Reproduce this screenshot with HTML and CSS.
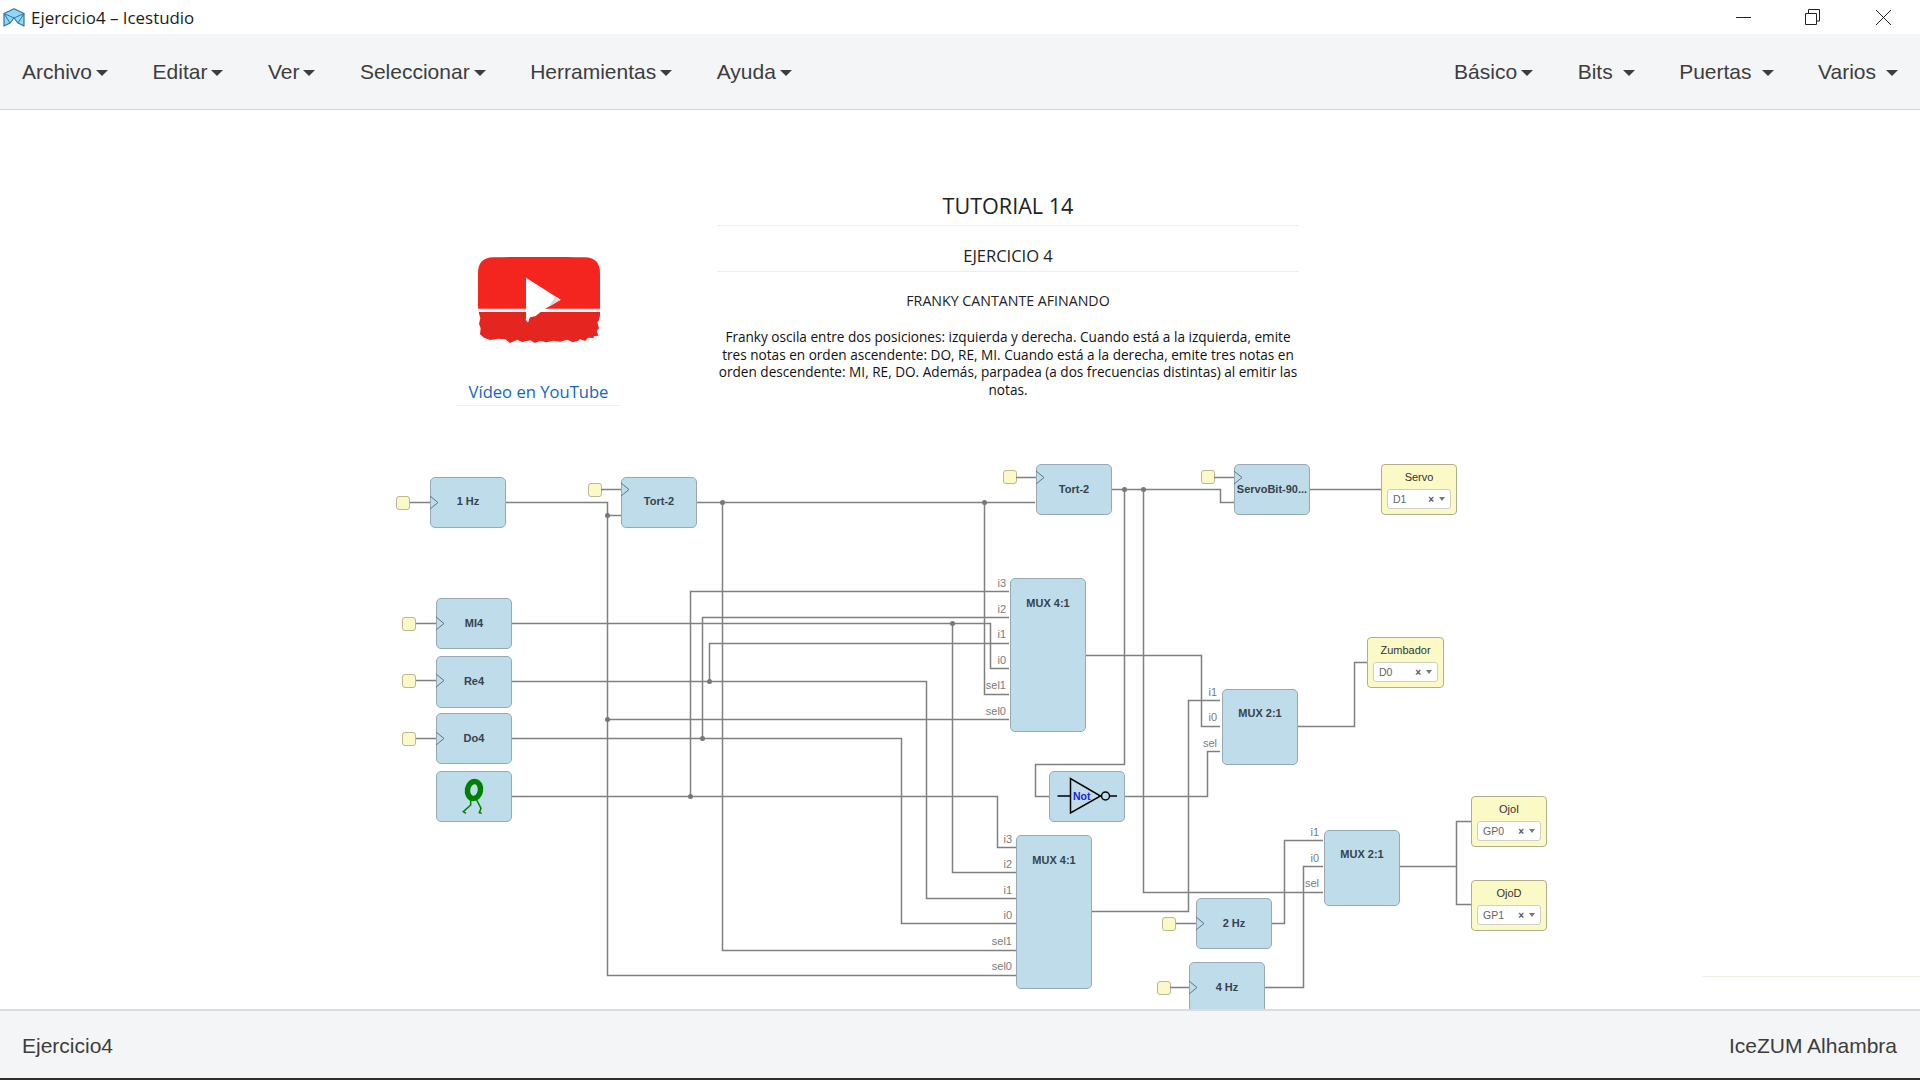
FILE: index.html
```html
<!DOCTYPE html>
<html lang="es">
<head>
<meta charset="utf-8">
<title>Ejercicio4 – Icestudio</title>
<link rel="stylesheet" href="styles.css">
</head>
<body>
<div class="app">
  <header class="titlebar">
    <div class="title-left">
      <svg class="app-icon" viewBox="0 0 22 19" width="22" height="19">
        <path d="M1 5.5 11 .8 21 5.5V18L15 15 11 10 7 15 1 18Z" fill="#8fd6f7" stroke="#2f7699" stroke-width="1.2" stroke-linejoin="round"/>
        <path d="M1 5.5 7 15M21 5.5 15 15M1 5.5 11 10 21 5.5" fill="none" stroke="#2f7699" stroke-width="1"/>
      </svg>
      <span class="title-text">Ejercicio4 – Icestudio</span>
    </div>
    <div class="win-controls">
      <svg class="win-min" width="15" height="15" viewBox="0 0 15 15"><path d="M0 7.5H15" stroke="#222" fill="none"/></svg>
      <svg class="win-max" width="15" height="16" viewBox="0 0 15 16"><path d="M.5 4.5H11.5V15.5H.5ZM3.5 4.5V.5H14.5V12H11.5" stroke="#222" fill="none"/></svg>
      <svg class="win-close" width="15" height="15" viewBox="0 0 15 15"><path d="M0 0 15 15M15 0 0 15" stroke="#222" fill="none"/></svg>
    </div>
  </header>

  <nav class="navbar">
    <ul class="menu">
      <li>Archivo<i class="caret"></i></li>
      <li>Editar<i class="caret"></i></li>
      <li>Ver<i class="caret"></i></li>
      <li>Seleccionar<i class="caret"></i></li>
      <li>Herramientas<i class="caret"></i></li>
      <li>Ayuda<i class="caret"></i></li>
    </ul>
    <ul class="menu">
      <li>Básico<i class="caret"></i></li>
      <li>Bits<i class="caret wide"></i></li>
      <li>Puertas<i class="caret wide"></i></li>
      <li>Varios<i class="caret wide"></i></li>
    </ul>
  </nav>

  <main class="canvas">
    <section class="note-video">
      <svg class="yt-logo" viewBox="0 0 366 264" width="122" height="88">
        <path d="M0 155V50C0 18 14 2 46 1 130-1 236-1 320 1 352 2 366 18 366 50V155Z" fill="#f4241f"/>
        <path d="M2 165H368L365 180 362 192 358 196 363 214 356 222 361 236 348 238 346 243 330 242 322 252 306 247 300 251 284 256 268 248 246 254 226 251 206 256 186 252 170 258 158 250 132 255 118 248 96 258 82 247 60 245 36 249 18 242 6 232 8 214 3 200 7 184Z" fill="#e5251f"/>
        <path d="M144 62 248 128 142 190 150 170 144 165Z" fill="#fff"/>
        <path d="M232 118 248 128 212 149Z" fill="#dcdcdc"/>
        <path d="M144 155V190L150 197 156 180 172 178 188 165Z" fill="#fff"/>
      </svg>
      <a class="video-link">Vídeo en YouTube</a>
    </section>

    <section class="note-text">
      <h1>TUTORIAL 14</h1>
      <h2>EJERCICIO 4</h2>
      <h3>FRANKY CANTANTE AFINANDO</h3>
      <p>Franky oscila entre dos posiciones: izquierda y derecha. Cuando está a la izquierda, emite tres notas en orden ascendente: DO, RE, MI. Cuando está a la derecha, emite tres notas en orden descendente: MI, RE, DO. Además, parpadea (a dos frecuencias distintas) al emitir las notas.</p>
    </section>

    <div class="faint-line"></div>

    <div class="pin p1"></div><div class="pin p2"></div><div class="pin p3"></div>
    <div class="pin p4"></div><div class="pin p5"></div><div class="pin p6"></div>
    <div class="pin p7"></div><div class="pin p8"></div><div class="pin p9"></div>

    <div class="node n-hz1">1 Hz</div>
    <div class="node n-tort1">Tort-2</div>
    <div class="node n-tort3">Tort-2</div>
    <div class="node n-servobit">ServoBit-90...</div>
    <div class="node n-mi4">MI4</div>
    <div class="node n-re4">Re4</div>
    <div class="node n-do4">Do4</div>
    <div class="node n-fig"></div>
    <div class="node n-not"></div>
    <div class="node tall n-muxa">MUX 4:1</div>
    <div class="node tall n-muxb">MUX 4:1</div>
    <div class="node square n-mux2a">MUX 2:1</div>
    <div class="node square n-mux2b">MUX 2:1</div>
    <div class="node n-hz2">2 Hz</div>
    <div class="node n-hz4">4 Hz</div>

    <div class="out n-servo"><span>Servo</span><div class="sel"><b>D1</b><em>×</em><i></i></div></div>
    <div class="out n-zum"><span>Zumbador</span><div class="sel"><b>D0</b><em>×</em><i></i></div></div>
    <div class="out n-ojoi"><span>OjoI</span><div class="sel"><b>GP0</b><em>×</em><i></i></div></div>
    <div class="out n-ojod"><span>OjoD</span><div class="sel"><b>GP1</b><em>×</em><i></i></div></div>

    <svg class="wires" viewBox="0 110 1920 899" width="1920" height="899">
      <g class="wire">
        <path d="M410 502.5H430M506 502.5H607.5V975.5H1016M607.5 515.5H621M601 489.5H621"/>
        <path d="M697 502.5H1035M722.5 502.5V950.5H1016M984.5 502.5V694.5H1009"/>
        <path d="M416 623.5H436M416 680.5H436M416 738.5H436"/>
        <path d="M512 623.5H990.5V668.5H1009"/>
        <path d="M512 681.5H926.5V898.5H1016"/>
        <path d="M512 738.5H901.5V923.5H1016"/>
        <path d="M512 796.5H997.5V847.5H1016"/>
        <path d="M690.5 796.5V591.5H1009M702.5 738.5V617.5H1009M709.5 681.5V643.5H1009M607.5 719.5H1009"/>
        <path d="M952.5 623.5V872.5H1016"/>
        <path d="M1016 477.5H1036M1112 489.5H1220.5V502.5H1234M1214 477.5H1234M1310 489.5H1381"/>
        <path d="M1124.5 489.5V764.5H1035.5V796.5H1049M1143.5 489.5V892.5H1323"/>
        <path d="M1125 796.5H1207.5V751.5H1220M1086 655.5H1201.5V726.5H1220M1092 911.5H1188.5V700.5H1220"/>
        <path d="M1298 726.5H1354.5V662.5H1367"/>
        <path d="M1176 923.5H1196M1272 923.5H1284.5V840.5H1323M1170 987.5H1189M1265 987.5H1303.5V866.5H1323"/>
        <path d="M1400 866.5H1456.5M1471 821.5H1456.5V904.5H1471"/>
      </g>
      <g class="joints">
        <circle cx="607.5" cy="515.5" r="2.5"/><circle cx="722.5" cy="502.5" r="2.5"/>
        <circle cx="984.5" cy="502.5" r="2.5"/><circle cx="952.5" cy="623.5" r="2.5"/>
        <circle cx="709.5" cy="681.5" r="2.5"/><circle cx="702.5" cy="738.5" r="2.5"/>
        <circle cx="607.5" cy="719.5" r="2.5"/><circle cx="690.5" cy="796.5" r="2.5"/>
        <circle cx="1124.5" cy="489.5" r="2.5"/><circle cx="1143.5" cy="489.5" r="2.5"/>
      </g>
      <path class="clk" d="M430 496 438 502.5 430 509M621 483 629 489.5 621 496M436 617 444 623.5 436 630M436 674 444 680.5 436 687M436 732 444 738.5 436 745M1036 471 1044 477.5 1036 484M1234 471 1242 477.5 1234 484M1196 917 1204 923.5 1196 930M1189 981 1197 987.5 1189 994"/>
      <g class="port">
        <text x="1006" y="587">i3</text><text x="1006" y="613">i2</text><text x="1006" y="638">i1</text>
        <text x="1006" y="664">i0</text><text x="1006" y="689">sel1</text><text x="1006" y="715">sel0</text>
        <text x="1217" y="696">i1</text><text x="1217" y="721">i0</text><text x="1217" y="747">sel</text>
        <text x="1012" y="843">i3</text><text x="1012" y="868">i2</text><text x="1012" y="894">i1</text>
        <text x="1012" y="919">i0</text><text x="1012" y="945">sel1</text><text x="1012" y="970">sel0</text>
        <text x="1319" y="836">i1</text><text x="1319" y="862">i0</text><text x="1319" y="887">sel</text>
      </g>
      <g class="figure">
        <ellipse cx="474" cy="790" rx="6.5" ry="8.5" transform="rotate(10 474 790)"/>
        <path class="legs" d="M470.7 800V805L463.3 811.7 466 813.3M476.7 800 481 808.3 479.3 812.7 481.7 813.3"/>
      </g>
      <g class="gate">
        <path d="M1057.5 796H1070.5M1070.5 778.5V813L1100.5 796ZM1110 796H1117"/>
        <circle cx="1105.5" cy="796" r="4"/>
        <text x="1073" y="800">Not</text>
      </g>
    </svg>
  </main>

  <footer class="statusbar">
    <span>Ejercicio4</span>
    <span>IceZUM Alhambra</span>
  </footer>
  <div class="bottom-edge"></div>
</div>
</body>
</html>
```

FILE: styles.css
```css
* { box-sizing: border-box; }
html, body { margin: 0; height: 100%; overflow: hidden; background: #fff; }
.app { display: flex; flex-direction: column; height: 100vh; font-family: "Liberation Sans", Arial, sans-serif; color: #3d3d3d; }

.titlebar { height: 34px; flex: none; display: flex; justify-content: space-between; align-items: center; background: #fff; }
.title-left { display: flex; align-items: center; gap: 6px; padding-left: 3px; }
.title-text { font-family: "Open Sans", sans-serif; font-size: 16.9px; color: #1b1b1b; }
.win-controls { display: flex; align-items: center; gap: 54px; padding-right: 29px; }
.win-close { margin-left: 2px; }

.navbar { height: 76px; flex: none; display: flex; justify-content: space-between; align-items: center; padding: 0 22px; background: #f4f5f7; border-bottom: 1px solid #d6d6d6; }
.menu { display: flex; gap: 44.5px; margin: 0; padding: 0; list-style: none; font-size: 21px; }
.menu li { display: flex; align-items: center; }
.caret { width: 0; height: 0; margin-left: 4px; margin-top: 2px; border-left: 6px solid transparent; border-right: 6px solid transparent; border-top: 6px solid #3d3d3d; }
.caret.wide { margin-left: 10px; }

.canvas { position: relative; flex: 1; overflow: hidden; background: #fff; }

.note-video { position: absolute; left: 456px; top: 147px; width: 165px; height: 149px; display: flex; flex-direction: column; align-items: center; border-bottom: 1px solid #f0f0f0; font-family: "Open Sans", sans-serif; }
.yt-logo { flex: none; }
.video-link { margin-top: 35px; font-size: 16.6px; font-weight: 500; color: #1565c0; }

.note-text { position: absolute; left: 717px; top: 80px; width: 582px; text-align: center; font-family: "Open Sans", sans-serif; color: #222; }
.note-text h1 { margin: 0; height: 36px; padding-top: 1px; font-size: 21.6px; line-height: 30px; font-weight: 400; border-bottom: 1px solid #eee; }
.note-text h2 { margin: 0; height: 46px; padding-top: 19px; font-size: 16.5px; line-height: 22px; font-weight: 400; border-bottom: 1px solid #eee; }
.note-text h3 { margin: 19px 0 0; font-size: 14.2px; line-height: 20px; font-weight: 400; }
.note-text p { margin: 17px 0 0; font-size: 13.6px; line-height: 17.7px; color: #111; }

.faint-line { position: absolute; left: 1703px; top: 866px; width: 217px; height: 1px; background: #eeebe2; }

.pin { position: absolute; width: 14px; height: 14px; background: #fbf8c9; border: 1px solid #bcb98f; border-radius: 3px; }
.p1 { left: 396px; top: 386px; }
.p2 { left: 588px; top: 373px; }
.p3 { left: 402px; top: 507px; }
.p4 { left: 402px; top: 564px; }
.p5 { left: 402px; top: 622px; }
.p6 { left: 1003px; top: 360px; }
.p7 { left: 1201px; top: 360px; }
.p8 { left: 1162px; top: 807px; }
.p9 { left: 1157px; top: 871px; }

.node { position: absolute; width: 76px; height: 51px; display: flex; justify-content: center; align-items: center; padding-bottom: 2px; background: #bedcea; border: 1px solid #97a9b3; border-radius: 5px; font-size: 11px; font-weight: 700; color: #37424a; white-space: nowrap; }
.node.tall { height: 154px; align-items: flex-start; padding: 18px 0 0; }
.node.square { height: 76px; align-items: flex-start; padding: 17px 0 0; }
.n-hz1 { left: 430px; top: 367px; padding-bottom: 4px; }
.n-tort1 { left: 621px; top: 367px; padding-bottom: 3px; }
.n-tort3 { left: 1036px; top: 354px; }
.n-servobit { left: 1234px; top: 354px; }
.n-mi4 { left: 436px; top: 488px; }
.n-re4 { left: 436px; top: 546px; height: 52px; }
.n-do4 { left: 436px; top: 603px; }
.n-fig { left: 436px; top: 661px; }
.n-not { left: 1049px; top: 661px; }
.n-muxa { left: 1010px; top: 468px; }
.n-muxb { left: 1016px; top: 725px; }
.n-mux2a { left: 1222px; top: 579px; }
.n-mux2b { left: 1324px; top: 720px; }
.n-hz2 { left: 1196px; top: 788px; }
.n-hz4 { left: 1189px; top: 852px; }

.out { position: absolute; width: 76px; height: 51px; display: flex; flex-direction: column; padding: 5px 5px 4px; background: #fbf9c6; border: 1px solid #b0b08c; border-radius: 4px; font-size: 11px; color: #333; text-align: center; }
.out span { height: 15px; line-height: 15px; margin-bottom: 4px; }
.sel { height: 20px; display: flex; align-items: center; padding: 0 5px 0 5px; background: #fff; border: 1px solid #cfcfc4; border-radius: 3px; color: #666; }
.sel b { flex: 1; font-weight: 400; text-align: left; font-size: 10.5px; }
.sel em { font-style: normal; font-weight: 700; font-size: 10px; margin-right: 5px; color: #555; }
.sel i { width: 0; height: 0; border-left: 3px solid transparent; border-right: 3px solid transparent; border-top: 4px solid #777; }
.n-servo { left: 1381px; top: 354px; }
.n-zum { left: 1367px; top: 527px; width: 77px; }
.n-ojoi { left: 1471px; top: 686px; }
.n-ojod { left: 1471px; top: 770px; }

.wires { position: absolute; left: 0; top: 0; }
.wire path { fill: none; stroke: #808080; stroke-width: 1.5; }
.joints circle { fill: #777; }
.clk { fill: none; stroke: #5d7686; stroke-width: 1; }
.port text { font-family: "Liberation Sans", Arial, sans-serif; font-size: 11px; fill: #7a7a7a; text-anchor: end; }
.figure ellipse { fill: none; stroke: #008000; stroke-width: 5.5; }
.figure .legs { fill: none; stroke: #008000; stroke-width: 1.5; }
.gate path, .gate circle { fill: none; stroke: #000; stroke-width: 1.5; }
.gate text { font-family: "Liberation Sans", Arial, sans-serif; font-size: 10.5px; font-weight: 700; fill: #2222dd; }

.statusbar { height: 69px; flex: none; display: flex; justify-content: space-between; align-items: center; padding: 2px 23px 0 22px; background: #f4f5f7; border-top: 2px solid #dcdcdc; font-size: 21px; }
.bottom-edge { height: 2px; flex: none; background: #2e2e2e; }
```
